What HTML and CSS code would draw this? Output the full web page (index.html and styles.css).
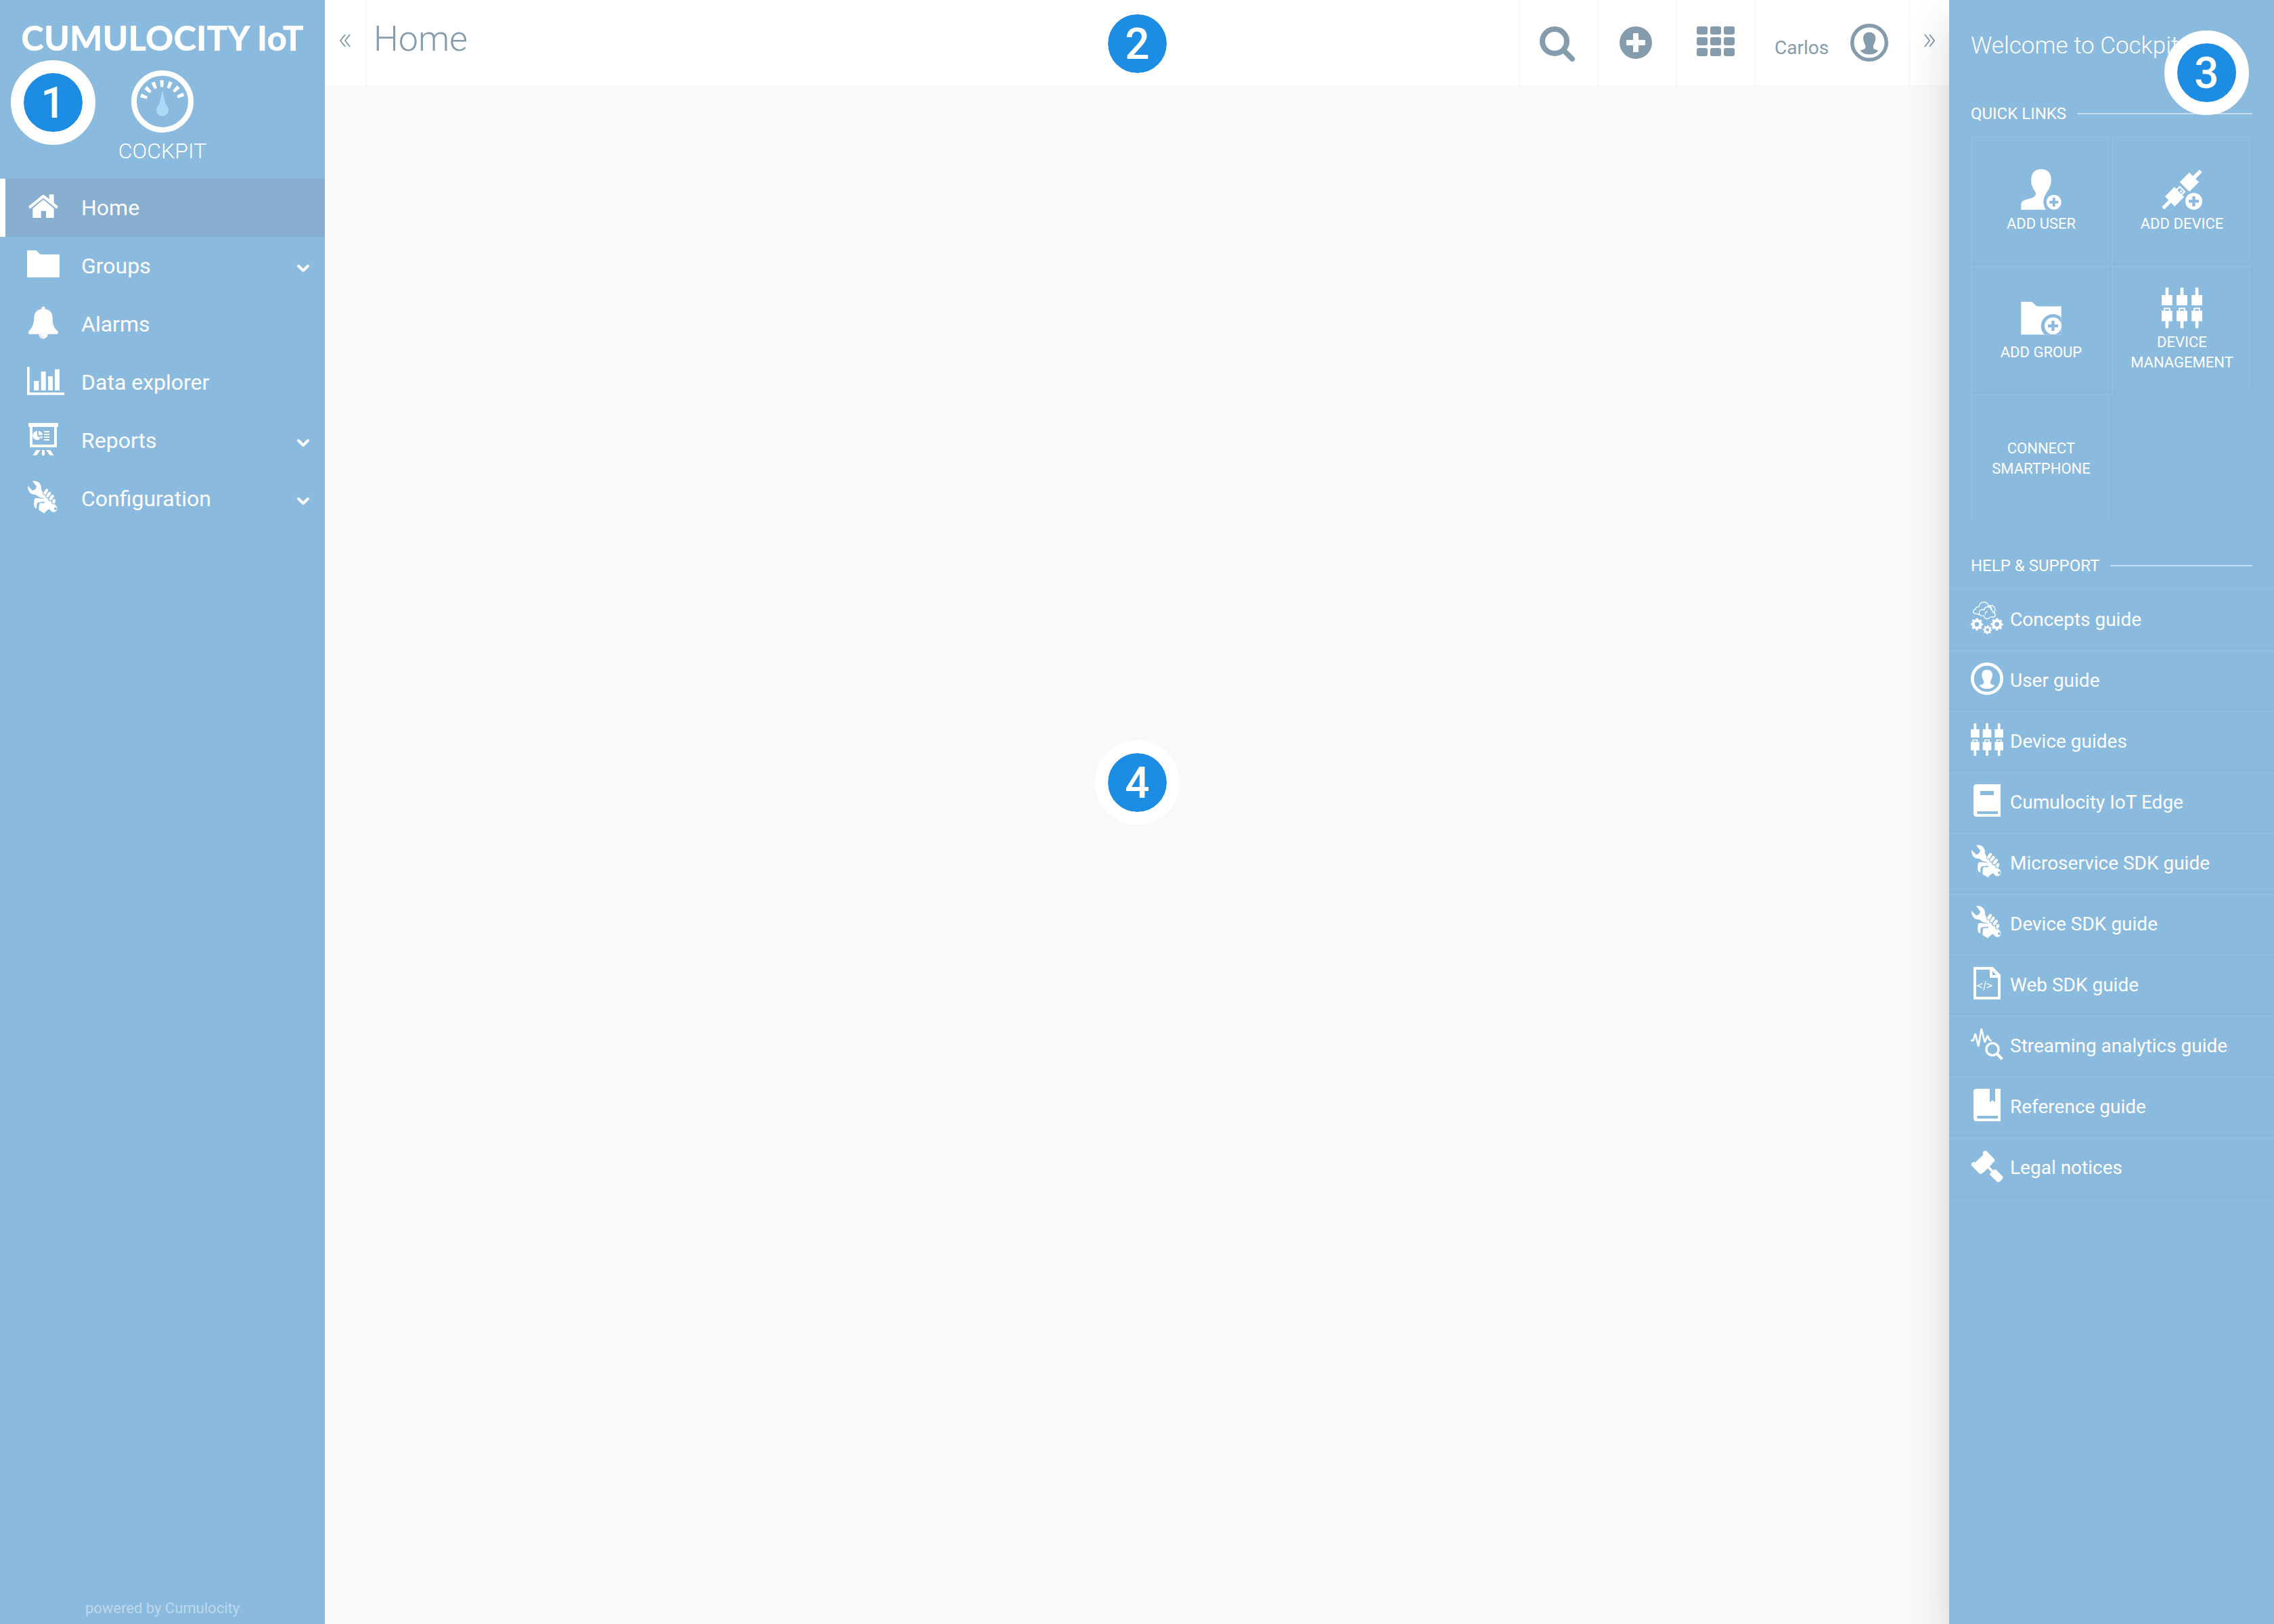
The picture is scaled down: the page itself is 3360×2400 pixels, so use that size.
FILE: index.html
```html
<!DOCTYPE html>
<html lang="en">
<head>
<meta charset="utf-8">
<title>Cockpit - Home</title>
<link rel="stylesheet" href="styles.css">
</head>
<body>
<svg class="sprite" aria-hidden="true">
  <symbol id="i-home" viewBox="0 0 144 144"><path d="M98 19h18q3 0 3 3v36L98 43z"/><path class="line" stroke-width="13" stroke-linecap="round" stroke-linejoin="round" d="M14 74 72 27l58 47"/><path d="m72 42 47 39v39q0 3-3 3H84V92H62v31H28q-3 0-3-3V81z"/></symbol>
  <symbol id="i-folder" viewBox="0 0 144 144"><path d="M0 9h41l14 15q4 3 8 3h81v102H0z"/></symbol>
  <symbol id="i-bell" viewBox="0 0 144 144"><path d="M64 11V7q1-7 8-7t8 7v4c20 2 33 17 33 40 0 32 9 47 23 58q4 7 0 13H8q-5-7 0-13c12-11 23-30 23-58 0-23 13-38 33-40z"/><path d="M52 122a20 21 0 0 0 40 0z"/><path class="gap" stroke-width="2" d="M57 125q4 12 15 13"/></symbol>
  <symbol id="i-chart" viewBox="0 0 144 144"><path d="M0 9h11v114h154v11H0zM30 72h22v42H30zM62 30h21v84H62zM93 51h21v63H93zM123 20h21v94h-21z"/></symbol>
  <symbol id="i-report" viewBox="0 0 144 144"><path fill-rule="evenodd" d="M6 0h132v18h-6v90H12V18H6zM24 18v78h96V18z"/><path d="M45 36v20l14 14A20 20 0 1 1 45 36zM51 36a20 20 0 0 1 18 18H51zM51 60h18q-1 5-4 9zM75 36h24v6H75zM75 48h24v6H75zM75 60h24v6H75zM75 72h24v6H75zM41 120h18l-17 24H25zM66 120h12v24H66zM84 120h18l17 24h-18z"/></symbol>
  <symbol id="i-tools" viewBox="0 0 144 144"><path d="M24 0C48-4 65 12 63 36c1 6 5 11 10 16l54 56a16 16 0 1 1-19 26L75 100c0-4 5-8 5-14 0-8-6-11-13-12-9-1-19-4-29-14C19 62 2 48 3 21l21 21c9-1 17-9 18-18z"/><circle class="gap fill" cx="126" cy="122" r="6"/><path class="gap" stroke-width="19" stroke-linecap="round" d="m87 43-8 11m20 1-8 12m20 0-8 13m18 4-4 9"/><path class="line" stroke-width="13" stroke-linecap="round" d="m87 41-8 13m21 0-9 12m22 1-9 12m16 7-2 7"/><path d="m41 75 32 3q9 2 9 7c0 7-5 7-12 7-18 0-25 1-27 12l-1 18-10-7q-3-20 0-33 2-7 9-7zM56 97l20 1 24 25q-18 9-24 20l-24-15q0-20 4-31z"/></symbol>
  <symbol id="i-plugs" viewBox="0 0 182 182"><g id="plug"><path d="M17 0h14v33h17v47H0V33h17zM0 104h48v47H31v31H17v-31H0z"/><path class="line" stroke-width="6" d="M12 106V93h24v13"/></g><use href="#plug" x="67"/><use href="#plug" x="134"/></symbol>
  <symbol id="i-user-add" viewBox="0 0 180 182"><path d="M45 48C45 17 62 0 90 0s45 17 45 48c0 28-14 47-23 61-16 26-16 48-1 73H0v-22c0-17 10-21 31-26 22-5 35-11 35-27C56 90 45 75 45 48z"/><circle cx="147" cy="148" r="33"/><path class="gap" stroke-width="12" d="M127 148h40M147 128v40"/></symbol>
  <symbol id="i-device-add" viewBox="0 0 180 182"><path d="m123 15 16 16 29-29 12 12-29 29 15 15-43 43-43-43zM56 80l44 44-43 43-16-17-30 31-11-12 30-30-16-16z"/><path class="line" stroke-width="7" d="m67 92 13-13 22 22-13 13M82 96l8 8"/><circle class="gap fill" cx="143" cy="144" r="40"/><circle cx="143" cy="144" r="38"/><path class="gap" stroke-width="13" d="M120 144h46M143 121v46"/></symbol>
  <symbol id="i-group-add" viewBox="0 0 180 182"><path d="M0 18h48l18 17q5 4 11 4h103v126H0z"/><path class="gap fill" d="M180 89a52 52 0 0 0-75 76h75z"/><circle cx="143" cy="126" r="38"/><path class="gap" stroke-width="13" d="M120 126h46M143 103v46"/></symbol>
  <symbol id="i-gear" viewBox="0 0 56 56"><circle class="line" cx="28" cy="28" r="16" stroke-width="12"/><circle class="line" cx="28" cy="28" r="24" stroke-width="7" stroke-dasharray="10 8.85" stroke-dashoffset="5"/></symbol>
  <symbol id="i-concepts" viewBox="0 0 144 144"><path class="line" stroke-width="4" stroke-linecap="round" d="M38 58c-8-3-14-5-20-5C7 49 9 36 21 35c0-9 6-12 15-12C38-4 77-4 78 20c22-10 36 9 26 27M76 19c10-1 16 5 18 14M58 63C33 68 30 40 50 35c4 0 6 0 9 2 2-18 30-18 31 0 7 1 8 5 8 10 15 7 14 23-3 22-5 0-8-1-10 0-7 13-26 7-27-6zM64 57c-1-8 3-12 9-12"/><use href="#i-gear" x="-1" y="73" width="56" height="56"/><use href="#i-gear" x="88" y="73" width="56" height="56"/><use href="#i-gear" x="54" y="105" width="40" height="40"/></symbol>
  <symbol id="i-user" viewBox="0 0 144 144"><circle class="line" cx="72" cy="72" r="65" stroke-width="14"/><path d="M49 55c0-14 9-23 23-23s24 9 24 23c0 15-9 23-9 33 0 11 10 9 19 15-16 19-52 19-68 0 9-6 20-5 20-15 0-9-9-18-9-33z"/></symbol>
  <symbol id="i-book" viewBox="0 0 144 144"><path fill-rule="evenodd" d="M26 0h106v144H26q-14 0-14-14V14Q12 0 26 0zM42 30v18h60V30zM33 120q-6 0-6 6t6 6h87v-12z"/></symbol>
  <symbol id="i-reference" viewBox="0 0 144 144"><path fill-rule="evenodd" d="M26 0h58v60l8-7q4-3 8 0l8 7V0h24v144H26q-14 0-14-14V14Q12 0 26 0zM33 120q-6 0-6 6t6 6h87v-12z"/></symbol>
  <symbol id="i-web" viewBox="0 0 144 144"><path fill-rule="evenodd" d="M12 0h86l34 35v109H12zM24 12v120h96V48H84V12zM96 18v18h17z"/><path class="line" stroke-width="4" d="M52 73 29 83l23 10M70 73l23 10-23 10M66 62l-9 42"/></symbol>
  <symbol id="i-stream" viewBox="0 0 144 144"><path class="line" stroke-width="8" stroke-linejoin="bevel" d="M0 56h11l9-30 14 56L47 4l15 60 12-29 9 18 9 5"/><circle class="line" cx="96" cy="95" r="27" stroke-width="10"/><path class="line" stroke-width="13" d="m115 114 24 25"/></symbol>
  <symbol id="i-legal" viewBox="0 0 144 144"><path d="m56 22 40 40-40 40-42-40z"/><path class="line" stroke-width="21" stroke-linecap="round" d="m64 16 31 31M13 66l31 31"/><path class="line" stroke-width="11" d="m66 66 34 34"/><path d="m85 106 20-18q5-1 9 3l26 27q6 6 0 12l-11 12q-7 5-13 0l-29-28q-4-4-2-8z"/></symbol>
  <symbol id="i-gauge" viewBox="0 0 92 92"><circle class="line" cx="46" cy="46" r="42" stroke-width="8"/><path class="line" stroke-width="10" stroke-dasharray="5 6.5" d="M18 41A29 29 0 0 1 74 41"/><path class="needle" d="m46 30 5 21a9 9 0 1 1-10 0z"/></symbol>
  <symbol id="i-search" viewBox="0 0 56 56"><circle class="line" cx="22" cy="26" r="18" stroke-width="8"/><path class="line" stroke-width="8" stroke-linecap="round" d="m36 40 12 12"/></symbol>
  <symbol id="i-plus" viewBox="0 0 56 56"><path fill-rule="evenodd" d="M26 4a24 24 0 1 0 0 48 24 24 0 0 0 0-48zm-3 10h6q1 0 1 1v9h9q1 0 1 1v6q0 1-1 1h-9v9q0 1-1 1h-6q-1 0-1-1v-9h-9q-1 0-1-1v-6q0-1 1-1h9v-9q0-1 1-1z"/></symbol>
  <symbol id="i-apps" viewBox="0 0 56 56"><g id="apps-row"><rect y="4" width="16" height="12" rx="3"/><rect x="20" y="4" width="16" height="12" rx="3"/><rect x="40" y="4" width="16" height="12" rx="3"/></g><use href="#apps-row" y="16"/><use href="#apps-row" y="32"/></symbol>
  <symbol id="i-chevron" viewBox="0 0 18 12"><path class="line" stroke-width="4" stroke-linecap="round" stroke-linejoin="round" d="m2 2 7 7 7-7"/></symbol>
  <symbol id="i-left" viewBox="0 0 18 20"><path class="line" stroke-width="2" d="M9 1 2 10l7 9M16 1l-7 9 7 9"/></symbol>
  <symbol id="i-right" viewBox="0 0 18 20"><path class="line" stroke-width="2" d="m9 1 7 9-7 9M2 1l7 9-7 9"/></symbol>
</svg>

<div class="app">
  <aside class="sidebar">
    <div class="brand">
      <div class="logo">CUMULOCITY IoT</div>
      <svg class="gauge"><use href="#i-gauge"/></svg>
      <div class="app-name">COCKPIT</div>
    </div>
    <nav class="nav">
      <a class="nav-item active" href="#"><svg class="icon"><use href="#i-home"/></svg><span>Home</span></a>
      <a class="nav-item" href="#"><svg class="icon"><use href="#i-folder"/></svg><span>Groups</span><svg class="chevron"><use href="#i-chevron"/></svg></a>
      <a class="nav-item" href="#"><svg class="icon"><use href="#i-bell"/></svg><span>Alarms</span></a>
      <a class="nav-item" href="#"><svg class="icon"><use href="#i-chart"/></svg><span>Data explorer</span></a>
      <a class="nav-item" href="#"><svg class="icon"><use href="#i-report"/></svg><span>Reports</span><svg class="chevron"><use href="#i-chevron"/></svg></a>
      <a class="nav-item" href="#"><svg class="icon"><use href="#i-tools"/></svg><span>Configuration</span><svg class="chevron"><use href="#i-chevron"/></svg></a>
    </nav>
    <footer class="powered">powered by Cumulocity</footer>
    <span class="badge badge-nav">1</span>
  </aside>

  <div class="main">
    <header class="topbar">
      <button class="toggle toggle-left" aria-label="Collapse navigator"><svg class="arrows"><use href="#i-left"/></svg></button>
      <h1 class="title">Home</h1>
      <button class="action" aria-label="Search"><svg class="action-icon"><use href="#i-search"/></svg></button>
      <button class="action" aria-label="Add"><svg class="action-icon"><use href="#i-plus"/></svg></button>
      <button class="action" aria-label="Applications"><svg class="action-icon"><use href="#i-apps"/></svg></button>
      <button class="account"><span class="account-name">Carlos</span><svg class="action-icon"><use href="#i-user"/></svg></button>
      <button class="toggle toggle-right" aria-label="Collapse drawer"><svg class="arrows"><use href="#i-right"/></svg></button>
      <span class="badge badge-top">2</span>
    </header>
    <main class="content"><span class="badge badge-content">4</span></main>
  </div>

  <aside class="drawer">
    <h2 class="welcome">Welcome to Cockpit</h2>
    <h3 class="section">QUICK LINKS</h3>
    <div class="tiles">
      <a class="tile" href="#"><svg class="tile-icon"><use href="#i-user-add"/></svg><span>ADD USER</span></a>
      <a class="tile" href="#"><svg class="tile-icon"><use href="#i-device-add"/></svg><span>ADD DEVICE</span></a>
      <a class="tile" href="#"><svg class="tile-icon"><use href="#i-group-add"/></svg><span>ADD GROUP</span></a>
      <a class="tile" href="#"><svg class="tile-icon"><use href="#i-plugs"/></svg><span>DEVICE MANAGEMENT</span></a>
      <a class="tile" href="#"><span>CONNECT SMARTPHONE</span></a>
    </div>
    <h3 class="section section-help">HELP &amp; SUPPORT</h3>
    <nav class="guides">
      <a class="guide" href="#"><svg class="icon"><use href="#i-concepts"/></svg><span>Concepts guide</span></a>
      <a class="guide" href="#"><svg class="icon"><use href="#i-user"/></svg><span>User guide</span></a>
      <a class="guide" href="#"><svg class="icon"><use href="#i-plugs"/></svg><span>Device guides</span></a>
      <a class="guide" href="#"><svg class="icon"><use href="#i-book"/></svg><span>Cumulocity IoT Edge</span></a>
      <a class="guide" href="#"><svg class="icon"><use href="#i-tools"/></svg><span>Microservice SDK guide</span></a>
      <a class="guide" href="#"><svg class="icon"><use href="#i-tools"/></svg><span>Device SDK guide</span></a>
      <a class="guide" href="#"><svg class="icon"><use href="#i-web"/></svg><span>Web SDK guide</span></a>
      <a class="guide" href="#"><svg class="icon"><use href="#i-stream"/></svg><span>Streaming analytics guide</span></a>
      <a class="guide" href="#"><svg class="icon"><use href="#i-reference"/></svg><span>Reference guide</span></a>
      <a class="guide" href="#"><svg class="icon"><use href="#i-legal"/></svg><span>Legal notices</span></a>
    </nav>
    <span class="badge badge-drawer">3</span>
  </aside>
</div>
</body>
</html>
```
FILE: styles.css
```css
:root {
  --panel: #8bbadf;
  --panel-active: #88aed0;
  --ink: #859cac;
  --page: #f9f9f9;
  --accent: #1d8ce3;
  --line: #f7f7f7;
}

* { box-sizing: border-box; }

body {
  margin: 0;
  background: var(--page);
  color: var(--ink);
  font-family: Roboto, "Liberation Sans", sans-serif;
  font-size: 28px;
}

a { color: inherit; text-decoration: none; }

button {
  padding: 0;
  border: 0;
  background: none;
  color: inherit;
  font: inherit;
}

h1, h2, h3 { margin: 0; }

svg { display: block; flex: none; fill: currentColor; overflow: visible; }
symbol { overflow: visible; }
.sprite { position: absolute; width: 0; height: 0; }
.line { fill: none; stroke: currentColor; }
.gap { fill: none; stroke: var(--panel); }
.gap.fill { fill: var(--panel); stroke: none; }
.needle { fill: #addaf9; }

.app { display: flex; min-height: 100vh; }

/* Navigator */
.sidebar {
  position: relative;
  display: flex;
  flex-direction: column;
  flex: none;
  width: 480px;
  background: var(--panel);
  color: #fff;
}

.brand {
  display: flex;
  flex-direction: column;
  align-items: center;
  padding: 26px 0 22px;
}

.logo {
  font-family: Lato, "Liberation Sans", sans-serif;
  font-size: 51px;
  font-weight: 900;
  line-height: 60px;
  white-space: nowrap;
}

.gauge { width: 92px; height: 92px; margin: 18px 0 8px; }
.app-name { font-size: 32px; font-weight: 300; line-height: 38px; }

.nav-item {
  display: flex;
  align-items: center;
  gap: 32px;
  height: 86px;
  padding: 0 23px 0 32px;
  border-left: 8px solid transparent;
  font-size: 32px;
}

.nav-item.active { background: var(--panel-active); border-left-color: #fff; }
.icon { width: 48px; height: 48px; margin-bottom: 4px; }
.chevron { width: 18px; height: 12px; margin: 8px 0 0 auto; }

.powered {
  margin-top: auto;
  padding-bottom: 8px;
  color: rgba(255, 255, 255, .45);
  font-size: 22px;
  line-height: 30px;
  text-align: center;
}

/* Top bar and content */
.main { display: flex; flex: 1; flex-direction: column; min-width: 0; }

.topbar {
  position: relative;
  display: flex;
  height: 128px;
  border-bottom: 2px solid var(--line);
  background: #fff;
}

.toggle { display: flex; justify-content: center; padding-top: 50px; }
.toggle-left { width: 62px; border-right: 2px solid var(--line); }
.toggle-right { width: 60px; border-left: 2px solid var(--line); }
.arrows { width: 18px; height: 20px; }

.title {
  flex: 1;
  padding-left: 10px;
  font-size: 52px;
  font-weight: 300;
  line-height: 116px;
}

.action {
  display: flex;
  align-items: center;
  justify-content: center;
  width: 116px;
  border-left: 2px solid var(--line);
}

.action-icon { width: 56px; height: 56px; }

.account {
  display: flex;
  align-items: center;
  gap: 32px;
  width: 228px;
  padding-left: 28px;
  border-left: 2px solid var(--line);
}

.account-name { padding-top: 14px; }
.content { position: relative; flex: 1; }

/* Drawer */
.drawer {
  position: relative;
  flex: none;
  width: 480px;
  padding-top: 46px;
  background: var(--panel);
  box-shadow: 0 32px 60px rgba(10, 25, 20, .16);
  color: #fff;
}

.welcome {
  padding: 0 32px;
  font-size: 35px;
  font-weight: 300;
  line-height: 44px;
}

.section {
  display: flex;
  align-items: center;
  gap: 16px;
  margin: 62px 32px 18px;
  font-size: 24px;
  font-weight: 400;
  line-height: 32px;
}

.section::after { content: ""; flex: 1; height: 2px; background: rgba(255, 255, 255, .5); }
.section-help { margin: 48px 32px 18px; }

.tiles { display: grid; grid-template-columns: 1fr 1fr; margin: 0 32px; }

.tile {
  display: flex;
  flex-direction: column;
  align-items: center;
  justify-content: center;
  gap: 6px;
  height: 190px;
  padding: 2px 16px 0;
  border: 2px solid;
  border-color: #90bde2 #89b6db #89b6db #90bde2;
  font-size: 22px;
  line-height: 30px;
  text-align: center;
}

.tile-icon { width: 60px; height: 60px; }

.guide {
  display: flex;
  align-items: center;
  gap: 10px;
  height: 90px;
  padding: 0 32px;
  border-top: 2px solid #90bde2;
  border-bottom: 2px solid #89b6db;
}

/* Numbered callouts */
.badge {
  position: absolute;
  display: flex;
  align-items: center;
  justify-content: center;
  width: 125px;
  height: 125px;
  padding-top: 2px;
  border: 19px solid #fff;
  border-radius: 50%;
  background: var(--accent);
  background-clip: padding-box;
  color: #fff;
  font-size: 64px;
  font-weight: 500;
  line-height: 1;
}

.badge-nav { top: 89px; left: 16px; }
.badge-top { top: 2px; left: calc(50% - 62px); }
.badge-drawer { top: 45px; right: 37px; }
.badge-content { top: 966px; left: calc(50% - 62px); }
```
